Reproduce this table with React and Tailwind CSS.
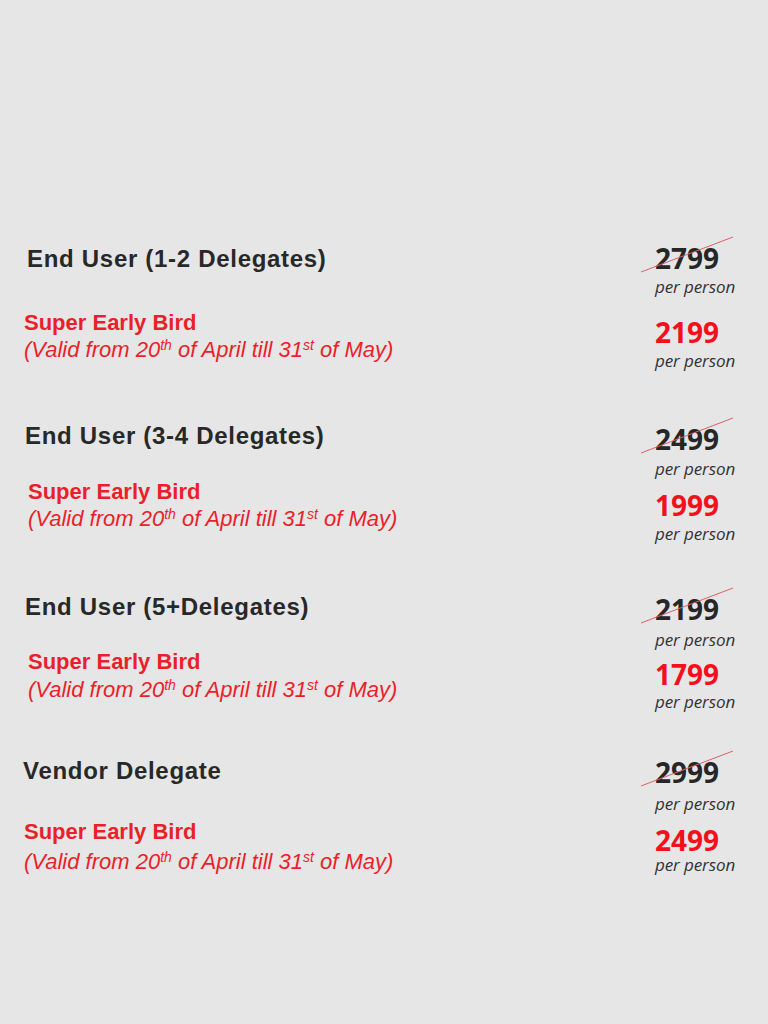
import React from 'react';

const sections = [
  {
    title: 'End User (1-2 Delegates)',
    oldPrice: '2799',
    newPrice: '2199',
    height: 'h-[177px]',
    titlePad: 'pl-[27px]',
    birdPad: 'pl-[24px]',
    birdGap: 'mt-[37px]',
    validGap: 'mt-[1px]',
    oldGap: 'mt-0',
    pp1Gap: 'mt-[7px]',
    newGap: 'mt-[23px]',
    pp2Gap: 'mt-[7px]',
  },
  {
    title: 'End User (3-4 Delegates)',
    oldPrice: '2499',
    newPrice: '1999',
    height: 'h-[171px]',
    titlePad: 'pl-[25px]',
    birdPad: 'pl-[28px]',
    birdGap: 'mt-[29px]',
    validGap: 'mt-[1px]',
    oldGap: 'mt-[4px]',
    pp1Gap: 'mt-[8px]',
    newGap: 'mt-[14px]',
    pp2Gap: 'mt-[7px]',
  },
  {
    title: 'End User (5+Delegates)',
    oldPrice: '2199',
    newPrice: '1799',
    height: 'h-[164px]',
    titlePad: 'pl-[25px]',
    birdPad: 'pl-[28px]',
    birdGap: 'mt-[28px]',
    validGap: 'mt-[2px]',
    oldGap: 'mt-[3px]',
    pp1Gap: 'mt-[9px]',
    newGap: 'mt-[12px]',
    pp2Gap: 'mt-[6px]',
  },
  {
    title: 'Vendor Delegate',
    oldPrice: '2999',
    newPrice: '2499',
    height: 'h-[140px]',
    titlePad: 'pl-[23px]',
    birdPad: 'pl-[24px]',
    birdGap: 'mt-[34px]',
    validGap: 'mt-[4px]',
    oldGap: 'mt-[2px]',
    pp1Gap: 'mt-[10px]',
    newGap: 'mt-[14px]',
    pp2Gap: 'mt-[3px]',
  },
];

const sans = "font-['Liberation_Sans',Arial,sans-serif]";
const open = "font-['Open_Sans','Noto_Sans',sans-serif]";

function PerPerson({ gap }) {
  return (
    <div className={`${gap} ${open} italic text-[17px] leading-[18px] text-[#333] tracking-[-0.1px]`}>
      per person
    </div>
  );
}

function Section({ s }) {
  return (
    <div className={`flex ${s.height}`}>
      <div className="flex-1">
        <div className={`${s.titlePad} ${sans} font-bold text-[24px] leading-[28px] tracking-[0.7px] text-[#282828]`}>
          {s.title}
        </div>
        <div className={`${s.birdGap} ${s.birdPad} ${sans} font-bold text-[22px] leading-[26px] text-[#ea1f2a]`}>
          Super Early Bird
        </div>
        <div className={`${s.validGap} ${s.birdPad} ${sans} italic text-[22px] leading-[26px] text-[#ea1f2a]`}>
          (Valid from 20<sup className="text-[14px]">th</sup> of April till 31
          <sup className="text-[14px]">st</sup> of May)
        </div>
      </div>
      <div className="w-[113px]">
        <div className={`${s.oldGap} relative w-fit`}>
          <div className={`${open} font-bold text-[28px] leading-[26px] text-[#262626]`}>
            {s.oldPrice}
          </div>
          <svg
            className="absolute left-[-16px] top-[-10px]"
            width="96"
            height="40"
            viewBox="0 0 96 40"
          >
            <line x1="2" y1="37" x2="94" y2="2" stroke="#d9626a" strokeWidth="1" />
          </svg>
        </div>
        <PerPerson gap={s.pp1Gap} />
        <div className={`${s.newGap} ${open} font-bold text-[28px] leading-[26px] text-[#f2101c]`}>
          {s.newPrice}
        </div>
        <PerPerson gap={s.pp2Gap} />
      </div>
    </div>
  );
}

export default function App() {
  return (
    <div className="w-full h-[1024px] bg-[#e6e6e6] pt-[245px] overflow-hidden">
      {sections.map((s) => (
        <Section key={s.title} s={s} />
      ))}
    </div>
  );
}
